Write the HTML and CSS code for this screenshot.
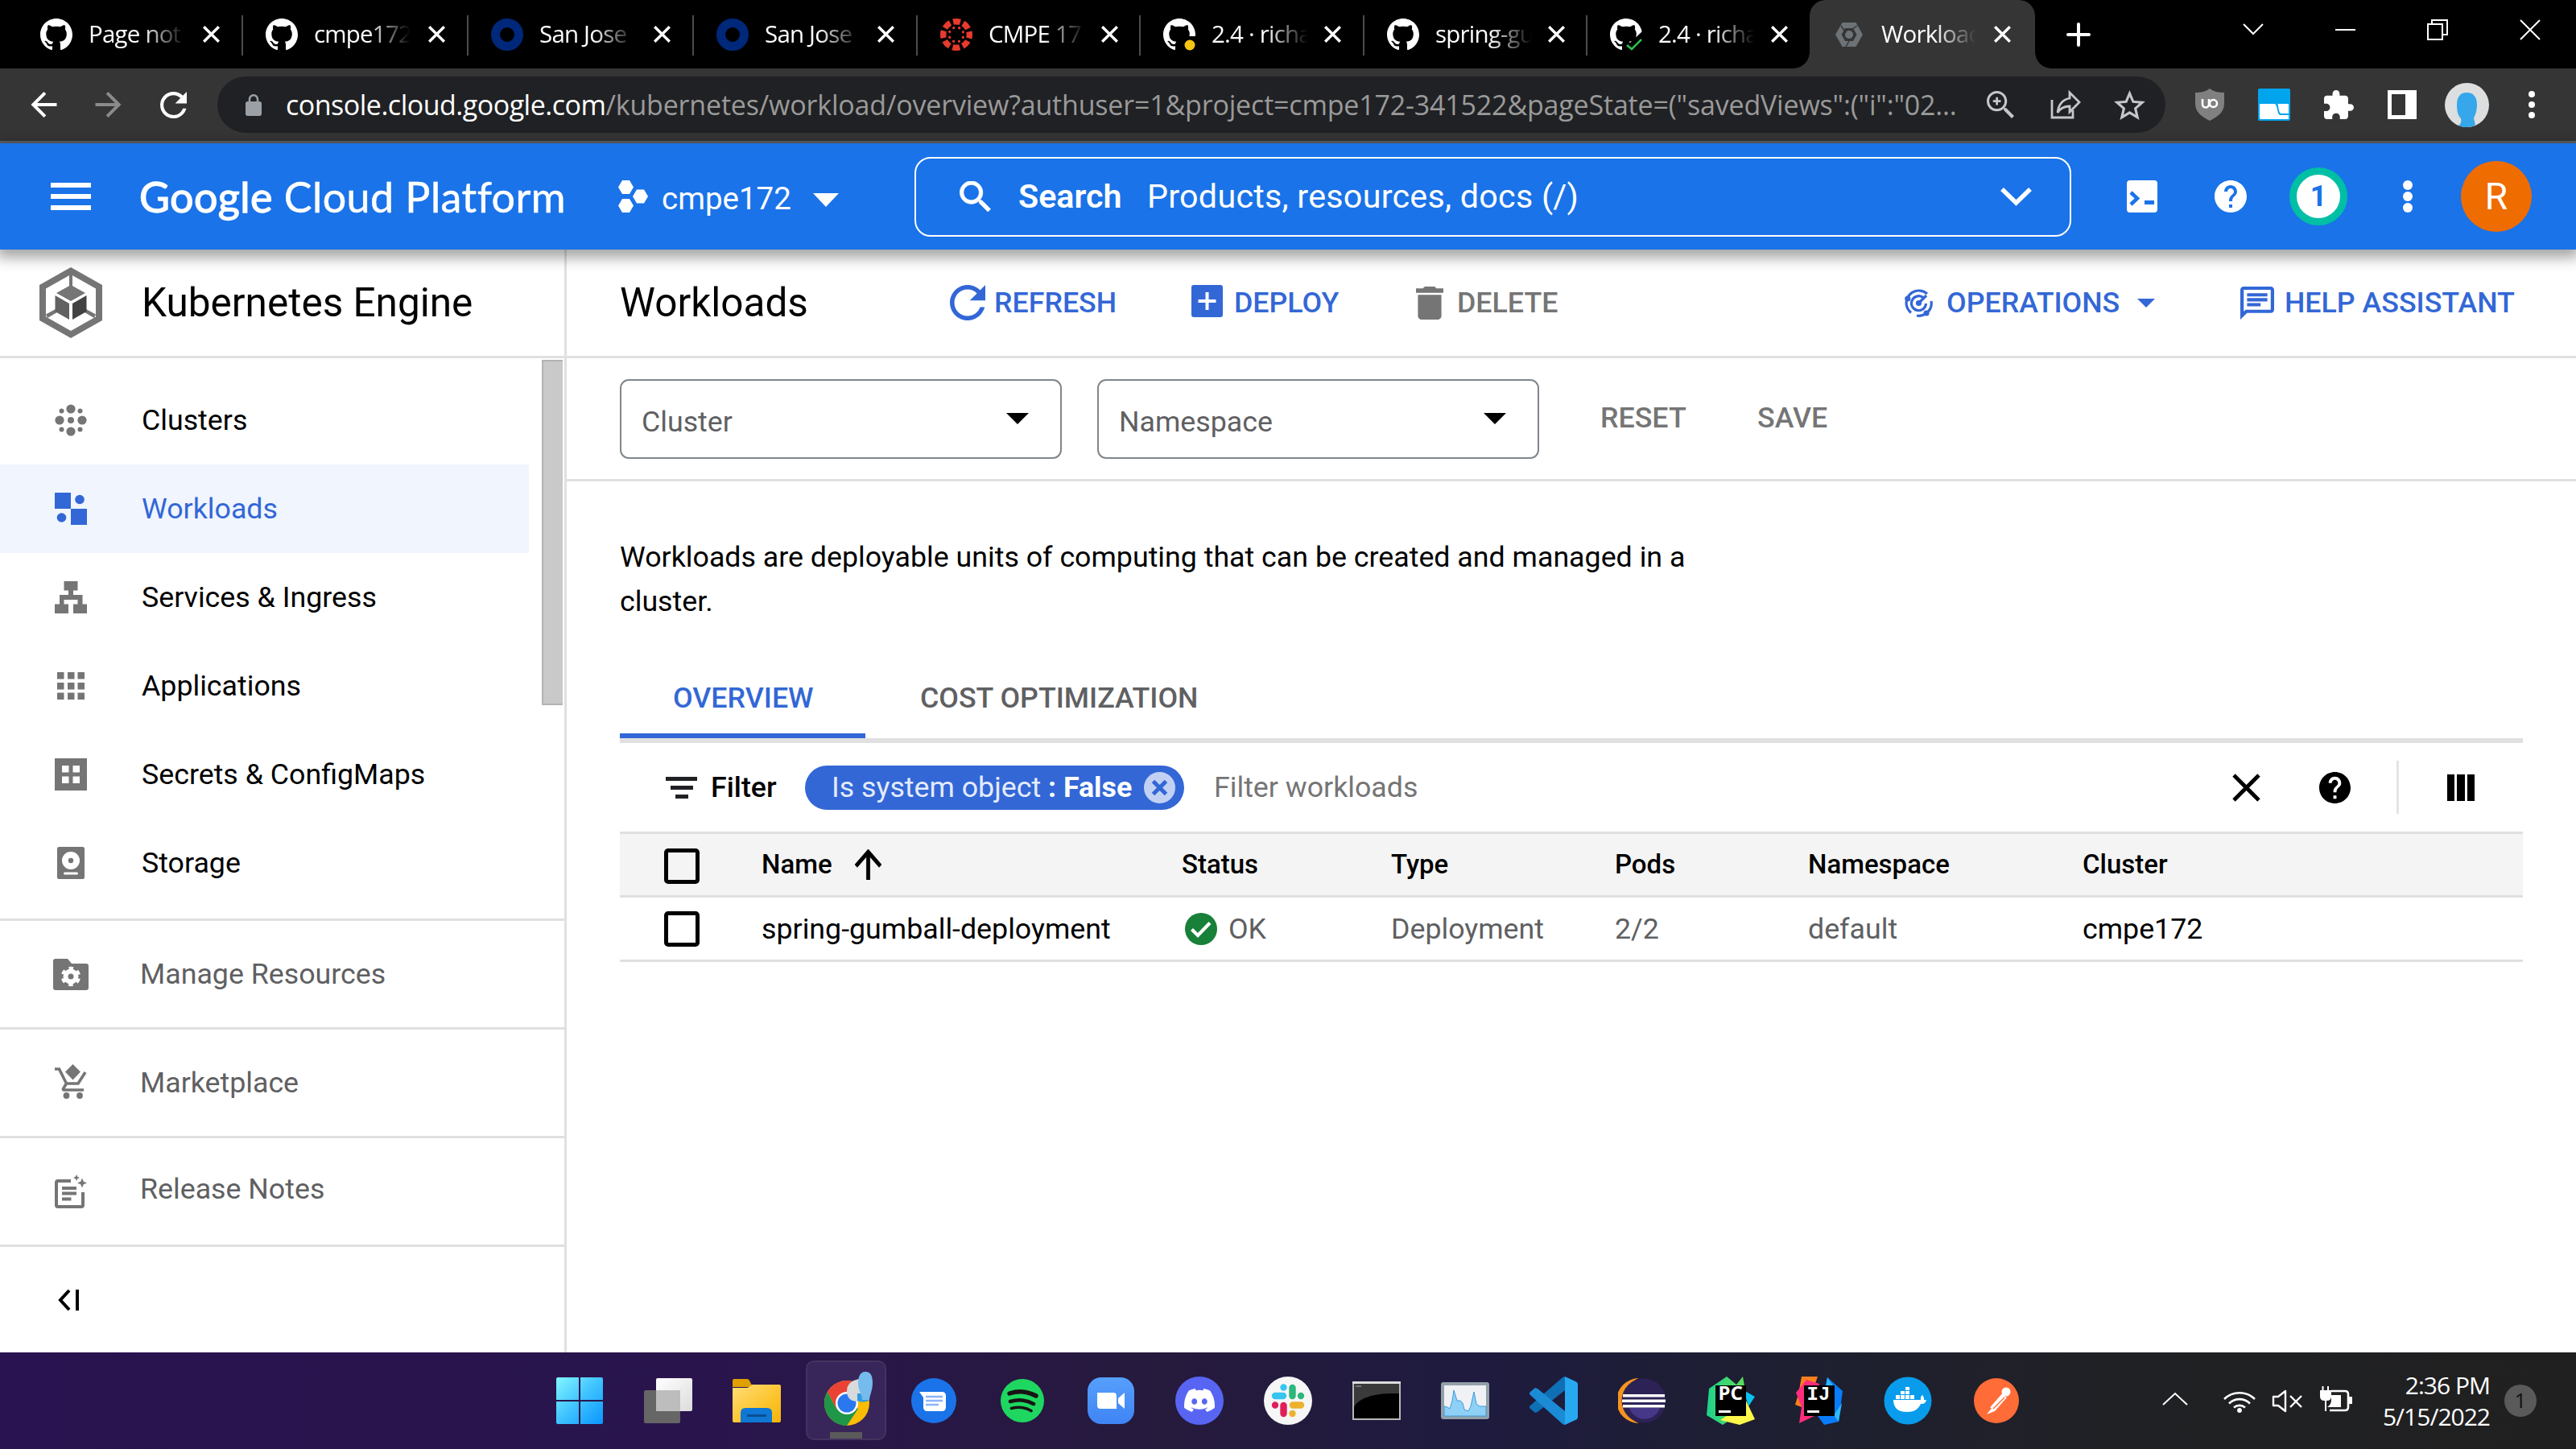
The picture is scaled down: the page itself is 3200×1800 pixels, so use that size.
FILE: index.html
```html
<!DOCTYPE html>
<html lang="en">
<head>
<meta charset="utf-8">
<title>Workloads – Kubernetes Engine</title>
<link rel="stylesheet" href="styles.css">
</head>
<body>
<svg class="defs" width="0" height="0" aria-hidden="true">
  <defs>
    <symbol id="github" viewBox="0 0 16 16"><path fill="#fff" d="M8 0C3.58 0 0 3.58 0 8c0 3.54 2.29 6.53 5.47 7.59.4.07.55-.17.55-.38 0-.19-.01-.82-.01-1.49-2.01.37-2.53-.49-2.69-.94-.09-.23-.48-.94-.82-1.13-.28-.15-.68-.52-.01-.53.63-.01 1.08.58 1.23.82.72 1.21 1.87.87 2.33.66.07-.52.28-.87.51-1.07-1.78-.2-3.64-.89-3.64-3.95 0-.87.31-1.59.82-2.15-.08-.2-.36-1.02.08-2.12 0 0 .67-.21 2.2.82.64-.18 1.32-.27 2-.27.68 0 1.36.09 2 .27 1.53-1.04 2.2-.82 2.2-.82.44 1.1.16 1.92.08 2.12.51.56.82 1.27.82 2.15 0 3.07-1.87 3.75-3.65 3.95.29.25.54.73.54 1.48 0 1.07-.01 1.93-.01 2.2 0 .21.15.46.55.38A8.013 8.013 0 0016 8c0-4.42-3.58-8-8-8z"/></symbol>
    <symbol id="close" viewBox="0 0 21 21"><path stroke="#fff" stroke-width="3.4" d="M1.2 1.2l18.6 18.6M19.8 1.2L1.2 19.8"/></symbol>
    <symbol id="ring" viewBox="0 0 40 40"><circle cx="20" cy="20" r="14.5" fill="none" stroke="#00287a" stroke-width="11"/></symbol>
    <symbol id="help" viewBox="2 2 20 20"><path d="M12 2C6.48 2 2 6.48 2 12s4.48 10 10 10 10-4.48 10-10S17.52 2 12 2zm1 17h-2v-2h2v2zm2.07-7.75l-.9.92C13.45 12.9 13 13.5 13 15h-2v-.5c0-1.1.45-2.1 1.17-2.83l1.24-1.26c.37-.36.59-.86.59-1.41 0-1.1-.9-2-2-2s-2 .9-2 2H8c0-2.21 1.79-4 4-4s4 1.79 4 4c0 .88-.36 1.68-.93 2.25z"/></symbol>
    <linearGradient id="winG" x1="0" y1="0" x2="1" y2="1"><stop offset="0" stop-color="#83f6ff"/><stop offset=".5" stop-color="#3fc3ff"/><stop offset="1" stop-color="#0a95ff"/></linearGradient>
    <linearGradient id="folG" x1="0" y1="0" x2="1" y2="1"><stop offset="0" stop-color="#ffdd7a"/><stop offset=".6" stop-color="#fcc42c"/><stop offset="1" stop-color="#f3b30c"/></linearGradient>
    <linearGradient id="zmG" x1="0" y1="0" x2="0" y2="1"><stop offset="0" stop-color="#569ffc"/><stop offset="1" stop-color="#3f84f4"/></linearGradient>
    <linearGradient id="pcG" x1="0" y1="0" x2="1" y2="0"><stop offset="0" stop-color="#1fd18b"/><stop offset="1" stop-color="#5ddf57"/></linearGradient>
    <linearGradient id="tvG" x1="0" y1="0" x2="1" y2="1"><stop offset="0" stop-color="#fff"/><stop offset="1" stop-color="#dcdcdc"/></linearGradient>
  </defs>
</svg>

<header class="tabstrip">
  <div class="tab"><svg class="fav"><use href="#github"/></svg><span class="tab-label">Page not</span><svg class="x"><use href="#close"/></svg></div>
  <div class="tab"><svg class="fav"><use href="#github"/></svg><span class="tab-label">cmpe172</span><svg class="x"><use href="#close"/></svg></div>
  <div class="tab"><svg class="fav"><use href="#ring"/></svg><span class="tab-label">San Jose</span><svg class="x"><use href="#close"/></svg></div>
  <div class="tab t278"><svg class="fav"><use href="#ring"/></svg><span class="tab-label">San Jose</span><svg class="x"><use href="#close"/></svg></div>
  <div class="tab t277"><svg class="fav" viewBox="0 0 40 40"><circle cx="20" cy="20" r="16.3" fill="none" stroke="#e63b2e" stroke-width="7.4" stroke-dasharray="9 3.8" stroke-dashoffset="4.5"/><circle cx="20" cy="20" r="9" fill="none" stroke="#e63b2e" stroke-width="3.2" stroke-linecap="round" stroke-dasharray=".1 6.97" stroke-dashoffset="-3.4"/></svg><span class="tab-label">CMPE 17</span><svg class="x"><use href="#close"/></svg></div>
  <div class="tab t278"><svg class="fav" viewBox="0 0 40 40"><use href="#github" width="40" height="40"/><path fill="#000" d="M18 40V30l6-8h16v18z"/><circle cx="33" cy="33" r="6.5" fill="#f9c513"/></svg><span class="tab-label">2.4 · rich<i>a</i></span><svg class="x"><use href="#close"/></svg></div>
  <div class="tab t277"><svg class="fav"><use href="#github"/></svg><span class="tab-label">spring-g<i>u</i></span><svg class="x"><use href="#close"/></svg></div>
  <div class="tab last"><svg class="fav" viewBox="0 0 40 40"><use href="#github" width="40" height="40"/><path fill="#000" d="M17 40V30l8 0 15-14v24z"/><path fill="none" stroke="#2cbe4e" stroke-width="2.6" d="M21 33l6 5 12-12"/></svg><span class="tab-label">2.4 · rich<i>a</i></span><svg class="x"><use href="#close"/></svg></div>
  <div class="tab active"><svg class="gcpfav" viewBox="0 0 34 30"><path fill="#6d7276" fill-rule="evenodd" d="M8.5 0h17L34 15l-8.500 15h-17L0 15zM12 7L7.500 15 12 23h10l4.500-8L22 7z"/><circle cx="17" cy="15" r="5" fill="#6d7276"/><path stroke="#353535" stroke-width="1.500" d="M7 4l6 9M27 4l-6 4M17 23l-4 7"/></svg><span class="tab-label">Workloa<i>c</i></span><svg class="x"><use href="#close"/></svg></div>
  <svg class="plus" viewBox="0 0 30 30"><path stroke="#fff" stroke-width="4" stroke-linecap="round" d="M15 2v26M2 15h26"/></svg>
  <div class="winctl">
    <svg width="26" height="15" viewBox="0 0 26 15"><path fill="none" stroke="#fff" stroke-width="2" d="M1 1l12 12L25 1"/></svg>
    <svg width="25" height="26" viewBox="0 0 25 26"><path fill="#fff" d="M0 12h25v2H0z"/></svg>
    <svg width="26" height="26" viewBox="0 0 26 26"><path fill="none" stroke="#fff" stroke-width="2" d="M1 6h18v19H1zM6 6V1h19v18h-6"/></svg>
    <svg width="26" height="26" viewBox="0 0 26 26"><path stroke="#fff" stroke-width="2" d="M1 1l24 24M25 1L1 25"/></svg>
  </div>
</header>

<div class="toolbar">
  <svg width="33" height="32" viewBox="4 4 16 16"><path fill="#fff" d="M20 11H7.830l5.590-5.590L12 4l-8 8 8 8 1.410-1.410L7.830 13H20v-2z"/></svg>
  <svg width="33" height="32" viewBox="4 4 16 16"><path fill="#8a8a8a" d="M12 4l-1.410 1.410L16.170 11H4v2h12.170l-5.580 5.590L12 20l8-8z"/></svg>
  <svg width="35" height="33" viewBox="4 4 16 16"><path fill="#fff" d="M17.650 6.350C16.200 4.900 14.210 4 12 4c-4.420 0-7.990 3.580-7.990 8s3.570 8 7.990 8c3.730 0 6.840-2.550 7.730-6h-2.080c-.82 2.330-3.040 4-5.650 4-3.310 0-6-2.690-6-6s2.690-6 6-6c1.660 0 3.140.69 4.220 1.780L13 11h7V4l-2.350 2.350z"/></svg>
  <div class="omnibox">
    <svg class="lock" viewBox="4 1 16 21" preserveAspectRatio="none"><path fill="#9aa0a6" d="M18 8h-1V6c0-2.760-2.240-5-5-5S7 3.240 7 6v2H6c-1.100 0-2 .9-2 2v10c0 1.100.9 2 2 2h12c1.100 0 2-.9 2-2V10c0-1.100-.9-2-2-2zM9 6c0-1.660 1.340-3 3-3s3 1.340 3 3v2H9V6z"/></svg>
    <span class="url"><b>console.cloud.google.com</b>/kubernetes/workload/overview?authuser=1&amp;project=cmpe172-341522&amp;pageState=("savedViews":("i":"02...</span>
    <svg width="34" height="34" viewBox="3 3 17.500 17.500"><path fill="#c4c7c9" d="M15.500 14h-.79l-.28-.27C15.410 12.590 16 11.110 16 9.500 16 5.910 13.090 3 9.500 3S3 5.910 3 9.500 5.910 16 9.500 16c1.610 0 3.090-.59 4.230-1.570l.27.28v.79l5 4.990L20.490 19l-4.990-5zm-6 .4C6.800 14.400 4.600 12.200 4.600 9.500S6.800 4.600 9.500 4.600s4.900 2.200 4.900 4.900-2.200 4.900-4.900 4.900zM12 10.200h-1.800V12H8.800v-1.800H7V8.800h1.800V7h1.400v1.800H12z"/></svg>
    <svg class="share" width="38" height="36" viewBox="0 0 38 36"><path fill="none" stroke="#c4c7c9" stroke-width="2.800" d="M2 12v22h26v-9M24 3l12 12-12 12v-7c-8 0-12 3-15 8 1-9 5-16 15-18z"/></svg>
    <svg width="39" height="37" viewBox="2 2 20 19"><path fill="#c4c7c9" d="M22 9.240l-7.190-.62L12 2 9.190 8.630 2 9.240l5.460 4.730L5.820 21 12 17.270 18.180 21l-1.630-7.030L22 9.240zM12 15.400l-3.760 2.270 1-4.280-3.320-2.880 4.380-.38L12 6.100l1.710 4.040 4.380.38-3.320 2.880 1 4.280L12 15.400z"/></svg>
  </div>
  <div class="exts">
    <svg width="36" height="40" viewBox="0 0 36 40"><path fill="#808080" d="M18 0c5 4 11 5 18 5v14c0 10-8 16-18 21C8 35 0 29 0 19V5c7 0 13-1 18-5z"/><path fill="none" stroke="#fff" stroke-width="2.600" d="M9 13v6.500a4 4 0 008 0V13"/><circle cx="22.500" cy="18.500" r="4.500" fill="none" stroke="#fff" stroke-width="2.600"/></svg>
    <svg width="40" height="40" viewBox="0 0 40 40"><rect width="40" height="40" rx="2" fill="#03a4ee"/><path fill="#fff" d="M2 19h18c5 0 3 14 8 14h10v5H3l-1-1zM24 19h14v12h-9c-4 0-3-10-5-12z"/></svg>
    <svg width="37" height="36" viewBox="2 1 21 21" preserveAspectRatio="none"><path fill="#fff" d="M20.500 11H19V7c0-1.100-.9-2-2-2h-4V3.500C13 2.120 11.880 1 10.500 1S8 2.120 8 3.500V5H4c-1.100 0-1.990.9-1.990 2v3.800H3.500c1.490 0 2.700 1.210 2.700 2.700s-1.210 2.700-2.700 2.700H2V20c0 1.100.9 2 2 2h3.800v-1.500c0-1.490 1.210-2.700 2.700-2.700 1.490 0 2.700 1.210 2.700 2.700V22H17c1.100 0 2-.9 2-2v-4h1.500c1.380 0 2.500-1.120 2.500-2.500S21.880 11 20.500 11z"/></svg>
    <svg width="36" height="36" viewBox="0 0 36 36"><path fill="#fff" fill-rule="evenodd" d="M0 0h36v36H0zM5 5v26h17V5z"/></svg>
    <svg width="55" height="55" viewBox="0 0 55 55"><circle cx="27.500" cy="27.500" r="27.500" fill="#dcdee0"/><path fill="#35a7ea" d="M27 12c9 0 13 6 13 15 0 8-2 12-4 17l2 8c-6 4-14 4-21 1 3-2 4-5 3-9-4-4-5-10-5-17 0-9 4-15 12-15z"/></svg>
    <svg width="8" height="34" viewBox="0 0 8 34"><g fill="#fff"><circle cx="4" cy="4" r="4"/><circle cx="4" cy="17" r="4"/><circle cx="4" cy="30" r="4"/></g></svg>
  </div>
</div>

<header class="gcp">
  <svg class="burger" viewBox="0 0 50 34"><path fill="#fff" d="M0 0h50v6H0zM0 14h50v6H0zM0 28h50v6H0z"/></svg>
  <span class="brand"><span class="goog">Google</span> Cloud Platform</span>
  <svg class="hexes" viewBox="0 0 37 40"><g fill="#fff"><path d="M5 0h9l5 8.500L14 17H5L0 8.500zM5 23h9l5 8.500L14 40H5L0 31.500zM23 11.500h9l5 8.500-5 8.500h-9L18 20z"/></g></svg>
  <span class="project">cmpe172</span>
  <svg class="pcaret" viewBox="0 0 32 17"><path fill="#fff" d="M0 0h32L16 17z"/></svg>
  <div class="search">
    <svg width="39" height="38" viewBox="3 3 17.500 17.500"><path fill="#fff" stroke="#fff" stroke-width=".4" d="M15.500 14h-.79l-.28-.27C15.410 12.590 16 11.110 16 9.500 16 5.910 13.090 3 9.500 3S3 5.910 3 9.500 5.910 16 9.500 16c1.610 0 3.090-.59 4.230-1.570l.27.28v.79l5 4.990L20.490 19l-4.990-5zm-6 0C7.010 14 5 11.990 5 9.500S7.010 5 9.500 5 14 7.010 14 9.500 11.990 14 9.500 14z"/></svg>
    <b>Search</b><span>Products, resources, docs (/)</span>
    <svg width="39" height="23" viewBox="0 0 39 23"><path fill="none" stroke="#fff" stroke-width="5.500" d="M2 2l17.500 17L37 2"/></svg>
  </div>
  <div class="gcp-right">
    <svg width="38" height="40" viewBox="0 0 38 40"><rect width="38" height="40" rx="4" fill="#fff"/><path fill="none" stroke="#1a73e8" stroke-width="4.500" d="M5 15l8 7.500L5 30"/><path fill="#1a73e8" d="M22 25h12v5H22z"/></svg>
    <svg width="40" height="40" fill="#fff"><use href="#help"/></svg>
    <span class="notif">1</span>
    <svg width="12" height="40" viewBox="0 0 12 40"><g fill="#fff"><circle cx="6" cy="6" r="6"/><circle cx="6" cy="20" r="6"/><circle cx="6" cy="34" r="6"/></g></svg>
    <span class="avatar">R</span>
  </div>
</header>

<div class="app">
  <aside class="side">
    <div class="side-head">
      <svg width="78" height="88" viewBox="0 0 78 88"><path fill="#757575" fill-rule="evenodd" d="M39 0l39 22v44L39 88 0 66V22zM39 9L8 26.500v35L39 79l31-17.500v-35z"/><path fill="#757575" d="M37 9h4v14h-4zM8 58.500L20 52l2 4-12 7zM70 58.500L58 52l-2 4 12 7z"/><path fill="#757575" d="M39 22l18 10-18 10-18-10z"/><path fill="#616161" d="M19.500 35L37 45v20L19.500 55z"/><path fill="#424242" d="M58.500 35L41 45v20l17.500-10z"/></svg>
      <span>Kubernetes Engine</span>
    </div>
    <div class="nav">
      <ul>
        <li><svg viewBox="0 0 40 40"><g fill="#757575"><circle cx="20" cy="6" r="5.600"/><circle cx="20" cy="34" r="5.600"/><circle cx="6" cy="20" r="5.600"/><circle cx="34" cy="20" r="5.600"/><circle cx="20" cy="20" r="4"/><circle cx="8.500" cy="8.500" r="3"/><circle cx="31.500" cy="8.500" r="3"/><circle cx="8.500" cy="31.500" r="3"/><circle cx="31.500" cy="31.500" r="3"/></g></svg><span>Clusters</span></li>
        <li class="on"><svg viewBox="0 0 40 40"><g fill="#3367d6"><path d="M0 0h20v20H0zM20 20h20v20H20z"/><circle cx="31" cy="8.500" r="5.800"/><circle cx="8.500" cy="31" r="5.800"/></g></svg><span>Workloads</span></li>
        <li><svg viewBox="0 0 40 40"><path fill="#757575" d="M11.500 0h17v11.500H23V17h11.500v11.500H40V40H23V28.500h5.500V23h-17v5.500H17V40H0V28.500h6V17h11v-5.500h-5.500z"/></svg><span>Services &amp; Ingress</span></li>
        <li><svg viewBox="0 0 40 40"><path fill="#757575" d="M3 3h8.500v8.500H3zM16 3h8.500v8.500H16zM28.500 3H37v8.500h-8.500zM3 16h8.500v8.500H3zM16 16h8.500v8.500H16zM28.500 16H37v8.500h-8.500zM3 28.500h8.500V37H3zM16 28.500h8.500V37H16zM28.500 28.500H37V37h-8.500z"/></svg><span>Applications</span></li>
        <li><svg viewBox="0 0 40 40"><path fill="#757575" fill-rule="evenodd" d="M0 0h40v40H0zM9 9v8.500h8.500V9zM22.500 9v8.500H31V9zM9 22.500V31h8.500v-8.500zM22.500 22.500V31H31v-8.500z"/></svg><span>Secrets &amp; ConfigMaps</span></li>
        <li><svg viewBox="0 0 40 40"><rect x="3" width="34" height="40" rx="2.500" fill="#757575"/><circle cx="20" cy="17" r="11" fill="#fff"/><circle cx="20" cy="17" r="3.200" fill="#757575"/><rect x="11" y="31.500" width="18" height="3" rx="1.500" fill="#fff"/></svg><span>Storage</span></li>
      </ul>
      <div class="thumb"></div>
    </div>
    <div class="foot"><svg width="44" height="39" viewBox="0 0 44 39"><path fill="#757575" d="M3 0h15l5 6h18c2 0 3 1 3 3v27c0 2-1 3-3 3H3c-2 0-3-1-3-3V3c0-2 1-3 3-3z"/><circle cx="22" cy="22" r="6.500" fill="none" stroke="#fff" stroke-width="6"/><circle cx="22" cy="22" r="10.500" fill="none" stroke="#fff" stroke-width="3.500" stroke-dasharray="5.500 5.500" stroke-dashoffset="-2.700"/></svg><span>Manage Resources</span></div>
    <div class="foot market"><svg width="40" height="43" viewBox="0 0 40 43"><path fill="#757575" d="M22.500 0l9.500 9.500-9.500 10L13 9.500z"/><path fill="none" stroke="#757575" stroke-width="3.600" d="M0 6h5.500l9 18H29l9-14M14.500 24l-4 6.500q-.5 1.500 1 1.500H36"/><circle cx="14.500" cy="39" r="3.900" fill="#757575"/><circle cx="31" cy="39" r="3.900" fill="#757575"/></svg><span>Marketplace</span></div>
    <div class="foot rel"><svg width="40" height="42" viewBox="0 0 40 42"><path fill="none" stroke="#757575" stroke-width="4" d="M20 8H4q-2 0-2 2v28q0 2 2 2h29q2 0 2-2V22"/><path fill="#757575" d="M9 15h18v4H9zM9 21.500h18v4H9zM9 28.500h11.500v4H9zM34 4.500l1.800 4.200L40 10.500l-4.200 1.800L34 16.500l-1.800-4.200-4.200-1.800 4.200-1.800zM27 0l1.200 2.800L31 4l-2.800 1.200L27 8l-1.200-2.800L23 4l2.800-1.200z"/></svg><span>Release Notes</span></div>
    <div class="collapse"><svg width="27" height="26" viewBox="0 0 27 26"><path fill="none" stroke="#000" stroke-width="4" d="M14 1L3 13l11 12M24 0v26"/></svg></div>
  </aside>

  <main>
    <div class="page-head">
      <h1>Workloads</h1>
      <a class="act refresh"><svg width="44" height="44" viewBox="4 4 16 16"><path d="M17.650 6.350C16.200 4.900 14.210 4 12 4c-4.420 0-7.990 3.580-7.990 8s3.570 8 7.990 8c3.730 0 6.840-2.550 7.730-6h-2.080c-.82 2.330-3.040 4-5.650 4-3.310 0-6-2.690-6-6s2.690-6 6-6c1.660 0 3.140.69 4.220 1.780L13 11h7V4l-2.350 2.350z"/></svg>REFRESH</a>
      <a class="act deploy"><svg width="39" height="40" viewBox="0 0 39 40"><path fill-rule="evenodd" d="M3 0h33q3 0 3 3v34q0 3-3 3H3q-3 0-3-3V3q0-3 3-3zM17.500 9v9H8.500v4h9v9h4v-9h9v-4h-9V9z"/></svg>DEPLOY</a>
      <a class="act delete"><svg width="34" height="41" viewBox="5 3 14 18" preserveAspectRatio="none"><path d="M6 19c0 1.100.9 2 2 2h8c1.100 0 2-.9 2-2V7.500H6V19zM19 4h-3.500l-1-1h-5l-1 1H5v2.400h14V4z"/></svg>DELETE</a>
      <a class="act ops"><svg width="35" height="35" viewBox="0 0 35 35"><g fill="none" stroke="#3367d6" stroke-width="3.200"><path d="M28 6A15.500 15.500 0 0 0 2.500 21A15.500 15.500 0 0 0 8 29.500M33 15A15.500 15.500 0 0 1 15 33M23.500 11A9 9 0 1 0 26.500 18"/><path d="M17.500 17.500L27 8"/></g><circle cx="17.500" cy="17.500" r="3.600"/><circle cx="3.800" cy="12" r="3.600"/><circle cx="27" cy="30" r="3.600"/></svg>OPERATIONS</a>
      <svg class="opcaret" viewBox="0 0 22 11"><path fill="#3367d6" d="M0 0h22L11 11z"/></svg>
      <a class="act assist"><svg width="42" height="41" viewBox="2 2 20 20" preserveAspectRatio="none"><path d="M20 2H4c-1.100 0-1.990.9-1.990 2L2 22l4-4h14c1.100 0 2-.9 2-2V4c0-1.100-.9-2-2-2zm0 14H5.170L4 17.170V4h16v12zM6 12h8v2H6zM6 9h12v2H6zM6 6h12v2H6z"/></svg>HELP ASSISTANT</a>
    </div>

    <div class="scope">
      <div class="select">Cluster<svg viewBox="0 0 28 14"><path d="M0 0h28L14 14z"/></svg></div>
      <div class="select">Namespace<svg viewBox="0 0 28 14"><path d="M0 0h28L14 14z"/></svg></div>
      <span class="btn reset">RESET</span><span class="btn">SAVE</span>
    </div>

    <section class="body">
      <p>Workloads are deployable units of computing that can be created and managed in a<br>cluster.</p>
      <nav class="tabs"><a class="sel">OVERVIEW</a><a>COST OPTIMIZATION</a></nav>
      <div class="filterbar">
        <svg class="ficon" viewBox="0 0 39 27"><path fill="#202124" d="M0 0h39v5H0zM6 11h28v5H6zM12 22h16v5H12z"/></svg>
        <span class="flabel">Filter</span>
        <div class="chip"><span>Is system object <b>: False</b></span><svg width="39" height="39" viewBox="0 0 39 39"><circle cx="19.500" cy="19.500" r="19.500" fill="#c2d1f3"/><path stroke="#3367d6" stroke-width="5" d="M11.500 11.500l16 16M27.500 11.500l-16 16"/></svg></div>
        <span class="ph">Filter workloads</span>
        <svg class="clear" viewBox="0 0 35 35"><path stroke="#000" stroke-width="4.800" d="M2 2l31 31M33 2L2 33"/></svg>
        <svg class="fhelp"><use href="#help"/></svg>
        <i class="vr"></i>
        <svg class="cols" viewBox="0 0 34 33"><path d="M0 0h9v33H0zM12 0h10v33H12zM25 0h9v33h-9z"/></svg>
      </div>
      <div class="row thead">
        <i class="box"></i><span class="name">Name<svg viewBox="4 4 16 16" preserveAspectRatio="none"><path stroke="#000" stroke-width=".35" d="M4 12l1.410 1.410L11 7.830V20h2V7.830l5.580 5.590L20 12l-8-8-8 8z"/></svg></span><span>Status</span><span>Type</span><span>Pods</span><span>Namespace</span><span>Cluster</span>
      </div>
      <div class="row">
        <i class="box"></i><span class="dark">spring-gumball-deployment</span><span class="ok"><svg viewBox="0 0 40 40"><circle cx="20" cy="20" r="20" fill="#188038"/><path fill="none" stroke="#fff" stroke-width="4.200" d="M8.500 20.500l7.500 7.500 15-15.500"/></svg>OK</span><span>Deployment</span><span>2/2</span><span>default</span><span class="dark">cmpe172</span>
      </div>
    </section>
  </main>
</div>

<footer class="taskbar">
  <div class="apps">
    <div><svg width="58" height="58" viewBox="0 0 58 58"><path fill="url(#winG)" d="M2 0h26v28H0V2q0-2 2-2zM30 0h26q2 0 2 2v26H30zM0 30h28v28H2q-2 0-2-2zM30 30h28v26q0 2-2 2H30z"/></svg></div>
    <div><svg width="60" height="56" viewBox="0 0 60 56"><rect y="15" width="45" height="41" rx="2" fill="#666"/><rect x="15" width="45" height="41" rx="2" fill="url(#tvG)"/><path fill="#bdbdbd" d="M15 15h30v26H15z"/></svg></div>
    <div><svg width="60" height="54" viewBox="0 0 60 54"><path fill="#dfa000" d="M2 0h16q2 0 3 2l4 8H0V2q0-2 2-2z"/><path fill="url(#folG)" d="M0 11h17q3 0 5-2l2-2h34q2 0 2 2v43q0 2-2 2H2q-2 0-2-2z"/><path fill="#0f78d4" d="M10 54V42q0-6 6-6h27q6 0 6 6v12z"/><path fill="#0a4f96" d="M18 44h24v3H18z"/></svg></div>
    <div class="current"><svg width="66" height="70" viewBox="0 0 66 70"><circle cx="33" cy="42" r="28" fill="#fbbc05"/><path fill="#ea4335" d="M8.800 28A28 28 0 0157.200 28H33L20 49z"/><path fill="#1f9648" d="M8.800 28A28 28 0 0033 70L47 49 33 42 20 49z"/><circle cx="33" cy="42" r="14" fill="#fff"/><circle cx="33" cy="42" r="11.500" fill="#2a78f0"/><path fill="#d8dadc" d="M48 12q-15 3-15 15t12 13h8V12z"/><path fill="#2f9be0" d="M46 30h14v9q-8 3-14 0z"/><path fill="#75bbec" d="M56 3c7 0 9 6 9 14 0 9-4 16-4 21h-9c0-7-5-12-5-20S49 3 56 3z"/></svg></div>
    <div><svg width="56" height="56" viewBox="0 0 56 56"><circle cx="28" cy="28" r="28" fill="#1a73e8"/><path fill="#fff" d="M10 17h28q5 0 5 5v14q0 5-5 5H20q-5 0-5-5V24z"/><path stroke="#8ab4f8" stroke-width="2.400" d="M18 23h21M18 28h21M18 33h16"/></svg></div>
    <div><svg width="54" height="54" viewBox="0 0 54 54"><circle cx="27" cy="27" r="27" fill="#1ed760"/><g fill="none" stroke="#191414" stroke-linecap="round"><path stroke-width="5.500" d="M11 18c11-3.500 23-2.500 33 3"/><path stroke-width="4.600" d="M12 28c10-3 20-2 29 3"/><path stroke-width="3.600" d="M13.500 36.500c8-2 17-1.500 24.500 3"/></g></svg></div>
    <div><svg width="58" height="58" viewBox="0 0 58 58"><rect width="58" height="58" rx="17" fill="url(#zmG)"/><path fill="#fff" d="M12 19h20q4 0 4 4v16H16q-4 0-4-4zM38 26l8-7v20l-8-7z"/></svg></div>
    <div><svg width="60" height="60" viewBox="0 0 60 60"><circle cx="30" cy="30" r="30" fill="#5865f2"/><svg x="11" y="15" width="38" height="29" viewBox="0 0 127.140 96.360"><path fill="#fff" d="M107.700,8.070A105.150,105.150,0,0,0,81.470,0a72.060,72.060,0,0,0-3.360,6.830A97.680,97.680,0,0,0,49,6.830,72.370,72.370,0,0,0,45.640,0,105.890,105.890,0,0,0,19.390,8.090C2.790,32.650-1.710,56.600.54,80.210h0A105.730,105.730,0,0,0,32.710,96.360,77.700,77.700,0,0,0,39.600,85.250a68.420,68.420,0,0,1-10.850-5.180c.91-.66,1.800-1.340,2.660-2a75.570,75.570,0,0,0,64.320,0c.87.71,1.760,1.390,2.660,2a68.680,68.680,0,0,1-10.870,5.190,77,77,0,0,0,6.890,11.100A105.250,105.250,0,0,0,126.600,80.220h0C129.240,52.840,122.090,29.110,107.700,8.070ZM42.450,65.690C36.180,65.690,31,60,31,53s5-12.740,11.430-12.740S54,46,53.890,53,48.840,65.690,42.450,65.690Zm42.240,0C78.410,65.690,73.250,60,73.250,53s5-12.740,11.440-12.740S96.230,46,96.120,53,91.080,65.690,84.690,65.690Z"/></svg></svg></div>
    <div><svg width="60" height="60" viewBox="0 0 60 60"><circle cx="30" cy="30" r="30" fill="#f6f6f6"/><g stroke-width="8.400" stroke-linecap="round"><path stroke="#36c5f0" d="M14 24h10M24.500 13.500v0"/><path stroke="#2eb67d" d="M35.500 14v10M46 24v0"/><path stroke="#ecb22e" d="M36 35.500h10M35.500 46v0"/><path stroke="#e01e5a" d="M24.500 36v10M14 35.500v0"/></g></svg></div>
    <div><svg width="60" height="48" viewBox="0 0 60 48"><path fill="#b8b8b8" d="M0 0h60v48H0z"/><path fill="#dcdcdc" d="M0 0h60v3H0z"/><path fill="#000" d="M2 3h56v43H2z"/><path fill="#3a3a3a" d="M2 3h56v12C28 14 8 20 2 32z"/><path stroke="#aaa" d="M4 6h7"/></svg></div>
    <div><svg width="60" height="46" viewBox="0 0 60 46"><rect width="60" height="46" rx="3" fill="#94a0a8"/><path fill="#eff1f4" d="M4 4h52v38H4z"/><path fill="#8fd0f7" stroke="#3b9ddb" d="M4 30l4 1 3 2 3-10 2-13 4 13h4l3 3 2 8 5 2 3-6 4-18 3 15 4 3h8v12H4z"/></svg></div>
    <div><svg width="60" height="60" viewBox="0 0 60 60"><path fill="#0f6fb4" d="M44 0v17L10 44l-3 1-6-5q-2-2 0-4L40 2q2-2 4-2z"/><path fill="#1b8bd6" d="M44 60V43L10 15l-3-1-6 5q-2 2 0 4l39 35q2 2 4 2z"/><path fill="#29a8f2" d="M44 0l13 6q3 1 3 4v40q0 3-3 4l-13 6z"/></svg></div>
    <div><svg width="60" height="56" viewBox="0 0 60 56"><path fill="#f7941e" d="M26 0A28 28 0 0026 56 30 30 0 0126 0z"/><circle cx="32" cy="28" r="27.500" fill="#2c2255"/><path fill="#473788" d="M14 37h38a20 20 0 01-38 0z"/><path fill="#fff" d="M6 20h52v3.500H6zM5 26.500h54v3.500H5zM6 33h52v3.500H6z"/></svg></div>
    <div><svg width="60" height="60" viewBox="0 0 60 60"><path fill="url(#pcG)" d="M3 15L25 0l12 10 8-10 3 18-10 30-18 12L0 48z"/><path fill="#07c3f2" d="M46 17l14 8-8 12z"/><path fill="#fcf84a" d="M48 28l12 25-19 7-24-6 14-9z"/><path fill="#000" d="M11 11h38v38H11z"/><path fill="#fff" d="M15 42h15v3H15z"/><text x="14.500" y="29" class="jb">PC</text></svg></div>
    <div><svg width="60" height="60" viewBox="0 0 60 60"><path fill="#fc801d" d="M8 0h20L14 40 0 35l4-13z"/><path fill="#fe2d7c" d="M14 4l16 5-6 40L5 58l3-20-7-18z"/><path fill="#087cfa" d="M40 1l19 17-5 38-18 4-8-11z"/><path fill="#2fb8ff" d="M40 1l8 12-10 6zM48 48l10-15-4 23z"/><path fill="#000" d="M11 11h38v38H11z"/><path fill="#fff" d="M15 42h15v3H15z"/><text x="14.500" y="29" class="jb mono">IJ</text></svg></div>
    <div><svg width="60" height="60" viewBox="0 0 60 60"><circle cx="30" cy="30" r="29.500" fill="#099cec"/><path fill="#fff" d="M10 29h36c0-3 0-5 2-6 2 2 2 4 2 6h3c-1 4-3 5-7 5-3 7-9 10-17 10-12 0-17-6-17-15zM15 23h5v5h-5zM21 23h5v5h-5zM27 23h5v5h-5zM33 23h5v5h-5zM21 18h5v4h-5zM27 18h5v4h-5zM27 13h5v4h-5z"/></svg></div>
    <div><svg width="56" height="56" viewBox="0 0 56 56"><circle cx="28" cy="28" r="28" fill="#ff6c37"/><circle cx="40" cy="17" r="5.500" fill="#fff"/><path fill="#fff" d="M36 21l5 3-15 17-10 4 7-9z"/><path fill="none" stroke="#fff" stroke-width="2.500" d="M36 20L22 36l4 3"/><path stroke="#ff6c37" stroke-width="1.500" d="M38 24L24 38"/></svg></div>
  </div>
  <div class="tray">
    <svg class="up" viewBox="0 0 32 17"><path fill="none" stroke="#fff" stroke-width="2" d="M1 16L16 2l15 14"/></svg>
    <svg class="wifi" viewBox="0 0 40 29"><g fill="none" stroke="#fff" stroke-width="2.600"><path d="M1 12a27 27 0 0138 0M7 17.500a18.500 18.500 0 0126 0M13 22.500a10.500 10.500 0 0114 0"/></g><circle cx="20" cy="26" r="2.900" fill="#fff"/></svg>
    <svg class="spk" viewBox="0 0 38 29"><path fill="none" stroke="#fff" stroke-width="2.400" stroke-linejoin="round" d="M2 9h6l9-7v25l-9-7H2zM23 8l14 14M37 8L23 22"/></svg>
    <svg class="bat" viewBox="0 0 40 32"><path fill="none" stroke="#fff" stroke-width="2.600" d="M14 6h17q4 0 4 4v16q0 4-4 4H12"/><path fill="#fff" d="M36 13h4v9h-4zM14 11h12v15H9q5-3 5-9zM0 5h14v8q0 5-6 5V31H6V18q-6 0-6-5zM2.500 0h2v5h-2zM9 0h2v5H9z"/></svg>
    <div class="clock"><span>2:36 PM</span><span>5/15/2022</span></div>
    <span class="count">1</span>
  </div>
</footer>
</body>
</html>
```

FILE: styles.css
```css
* { box-sizing: border-box; }
body { margin: 0; width: 3200px; height: 1800px; overflow: hidden; background: #fff; color: #000; font-family: Roboto, "Liberation Sans", sans-serif; font-size: 35.75px; white-space: nowrap; display: flex; flex-direction: column; }
svg { flex: none; display: block; }
.defs { position: absolute; }
ul, h1, p { margin: 0; padding: 0; list-style: none; font-weight: 400; }

/* browser tabs */
.tabstrip { flex: none; height: 85px; background: #000; padding-left: 22px; display: flex; align-items: center; color: #fff; font: 29.5px "Open Sans", "Noto Sans", sans-serif; }
.tab { flex: none; width: 280px; height: 85px; padding-left: 28px; display: flex; align-items: center; background: linear-gradient(#4c4c4c, #4c4c4c) right 19px / 2px 50px no-repeat; }
.tab svg { overflow: visible; }
.t278 { width: 278px; }
.t277 { width: 277px; }
.last { width: 276px; background: none; }
.fav { width: 40px; height: 40px; }
.tab-label { width: 122px; margin: -2px 0 0 20px; letter-spacing: -.8px; mask-image: linear-gradient(90deg, #000 55%, transparent 98%); }
.tab-label i { font-style: normal; letter-spacing: -5px; }
.x { width: 21px; height: 21px; margin-left: 20px; }
.t278 .x, .t277 .x, .last .x { margin-left: 18px; }
.active { position: relative; width: 280px; padding-left: 32px; background: #353535; border-radius: 20px 20px 0 0; }
.active::before, .active::after { content: ""; position: absolute; bottom: 0; width: 20px; height: 20px; }
.active::before { left: -20px; background: radial-gradient(circle at 0 0, transparent 19.5px, #353535 20px); }
.active::after { right: -20px; background: radial-gradient(circle at 100% 0, transparent 19.5px, #353535 20px); }
.gcpfav { width: 34px; height: 30px; }
.active .tab-label { margin-left: 23px; width: 120px; }
.plus { width: 30px; height: 30px; margin-left: 39px; }
.winctl { margin: -12px 44px 0 auto; display: flex; align-items: center; gap: 89px; }

/* address bar */
.toolbar { flex: none; height: 93px; padding-left: 38px; background: #353535; border-bottom: 3px solid #5f6061; display: flex; align-items: center; gap: 47px; }
.omnibox { width: 2420px; height: 70px; margin-left: -10px; padding-left: 35px; border-radius: 35px; background: #202124; display: flex; align-items: center; }
.lock { width: 20px; height: 27px; }
.url { width: 2113px; margin-left: 30px; color: #9a9a9a; font: 34px "Open Sans", "Noto Sans", sans-serif; letter-spacing: -.18px; }
.url b { font-weight: 400; color: #fff; letter-spacing: -.5px; }
.share { margin: 0 41px 0 45px; }
.exts { margin-left: -10px; display: flex; align-items: center; gap: 42px; }
.exts svg:nth-child(5) { margin-left: -7px; }
.exts svg:nth-child(6) { margin-left: 7px; }

/* cloud console bar */
.gcp { position: relative; z-index: 1; flex: none; height: 132px; background: #1a73e8; color: #fff; box-shadow: 0 6px 16px 4px rgba(0,0,0,.36); display: flex; align-items: center; font-size: 41.25px; }
.burger { width: 50px; height: 34px; margin-left: 63px; }
.brand { width: 595px; margin: 0 0 0 60px; font-family: Lato, sans-serif; font-size: 52px; letter-spacing: .45px; -webkit-text-stroke: .5px #fff; }
.goog { -webkit-text-stroke: 1.3px #fff; }
.hexes { width: 37px; height: 40px; }
.project { width: 188px; margin: 4px 0 0 17px; font-size: 38.5px; }
.pcaret { width: 32px; height: 17px; margin-top: 8px; }
.search { width: 1437px; height: 99px; margin-left: 94px; border: 2px solid #fff; border-radius: 20px; padding: 0 47px 0 54px; display: flex; align-items: center; letter-spacing: .25px; }
.search b { width: 160px; margin-left: 34px; font-weight: 600; letter-spacing: 0; }
.search svg:last-child { margin-left: auto; }
.gcp-right { margin: 0 55px 0 auto; display: flex; align-items: center; }
.gcp-right svg:nth-child(2) { margin-left: 71px; }
.notif { width: 72px; height: 72px; margin-left: 53px; border: 9px solid #00bfa5; border-radius: 50%; background: #fff; color: #1a73e8; font-size: 36px; font-weight: 700; line-height: 54px; text-align: center; }
.gcp-right svg:nth-child(4) { margin-left: 69px; }
.avatar { width: 88px; height: 88px; margin-left: 60px; border-radius: 50%; background: #ef6c00; font-size: 46px; line-height: 89px; text-align: center; }

/* frame */
.app { flex: none; height: 1370px; display: flex; }
.side { width: 704px; border-right: 3px solid #e0e0e0; display: flex; flex-direction: column; }
.side-head { flex: none; height: 135px; padding-left: 49px; border-bottom: 3px solid #e0e0e0; display: flex; align-items: center; gap: 49px; font-size: 49.5px; }
.nav { flex: none; height: 699px; padding-top: 22px; border-bottom: 3px solid #e0e0e0; display: flex; justify-content: space-between; }
.nav ul { width: 657px; }
.nav li { height: 110px; padding-left: 68px; display: flex; align-items: center; gap: 68px; }
.nav li svg { width: 40px; height: 40px; }
.nav .on { background: #f0f5fe; color: #3367d6; }
.thumb { width: 26px; height: 429px; margin: -20px 2px 0 0; background: #c9c9c9; border: 2px solid #b3b3b3; border-right: 0; }
.foot { flex: none; height: 135px; border-bottom: 3px solid #e0e0e0; display: flex; align-items: center; color: #5f6062; }
.foot svg { margin-left: 68px; margin-right: 66px; }
.foot svg[width="44"] { margin: 0 64px 0 66px; }
.market svg { margin-top: -3px; }
.rel span { margin-top: -7px; }
.collapse { flex: 1; padding-left: 72px; display: flex; align-items: center; }

main { flex: 1; }
.page-head { height: 135px; padding-left: 66px; border-bottom: 3px solid #e0e0e0; display: flex; align-items: center; }
h1 { width: 410px; font-size: 49.5px; }
.act { display: flex; align-items: center; font-weight: 500; color: #3367d6; fill: #3367d6; }
.refresh { width: 300px; gap: 11px; }
.deploy { width: 279px; gap: 14px; }
.deploy svg { margin-top: -4px; }
.delete { width: 607px; gap: 17px; color: #757575; fill: #757575; }
.ops { width: 289px; gap: 17px; }
.opcaret { width: 22px; height: 11px; margin-right: 106px; }
.assist { gap: 13px; }

.scope { height: 153px; padding: 0 0 0 66px; border-bottom: 3px solid #e0e0e0; display: flex; align-items: center; color: #5f6062; }
.select { width: 549px; height: 99px; margin: 1px 44px 0 0; padding: 7px 39px 0 25px; border: 2.5px solid #80868b; border-radius: 11px; display: flex; align-items: center; justify-content: space-between; }
.select svg { width: 28px; height: 14px; margin-top: -8px; }
.btn { margin-top: -2px; font-weight: 500; color: #757575; }
.reset { width: 195px; margin-left: 32px; }

.body { padding: 67px 66px 0; }
p { line-height: 55px; }
.tabs { height: 148px; border-bottom: 6px solid #e0e0e0; display: flex; align-items: flex-end; font-weight: 500; color: #5f6062; }
.tabs a { height: 99px; padding: 0 66px; line-height: 99px; }
.tabs .sel { width: 307px; background: linear-gradient(#3367d6, #3367d6) 0 100% / 305px 6px no-repeat; color: #3367d6; }
.filterbar { height: 110px; padding-left: 57px; display: flex; align-items: center; }
.ficon { width: 39px; height: 27px; }
.flabel { width: 117px; margin-left: 17px; font-weight: 500; }
.chip { width: 471px; height: 55px; padding: 0 11px 0 33px; border-radius: 28px; background: #3367d6; color: #e3ebfb; display: flex; align-items: center; justify-content: space-between; }
.chip b { color: #fff; font-weight: 700; }
.ph { width: 1265px; margin-left: 37px; color: #757575; }
.clear { width: 35px; height: 35px; }
.fhelp { width: 39px; height: 39px; margin-left: 73px; }
.vr { width: 3px; height: 66px; margin: 0 60px 0 57px; background: #e4e4e4; }
.cols { width: 34px; height: 33px; }
.row { height: 80px; padding-left: 55px; border-bottom: 3px solid #e0e0e0; display: grid; grid-template-columns: 121px 522px 260px 278px 240px 341px 1fr; align-items: center; color: #5f6062; }
.thead { height: 82px; border-top: 3px solid #e0e0e0; background: #f4f4f4; color: #000; font-size: 33px; font-weight: 500; }
.thead span { margin-top: -1px; }
.box { width: 44px; height: 44px; border: 5px solid #000; border-radius: 5px; }
.thead .box { margin-top: 4px; }
.name { display: flex; align-items: center; gap: 28px; }
.name svg { width: 33px; height: 38px; }
.dark { color: #000; }
.ok { display: flex; align-items: center; gap: 14px; padding-left: 4px; }
.ok svg { width: 40px; height: 40px; }

/* taskbar */
.taskbar { flex: none; height: 120px; padding-left: 665px; background: linear-gradient(90deg, #291350 0, #29154c 900px, #261a3d 1450px, #1e1b3f 1820px, #1e1f30 2250px, #202124 2650px, #202020 3200px); display: flex; align-items: center; color: #fff; font: 30px "Open Sans", "Noto Sans", sans-serif; }
.apps { display: flex; }
.apps div { width: 110px; height: 120px; display: flex; align-items: center; justify-content: center; }
.apps .current { width: 100px; height: 99px; margin: 10px 4px 10px 6px; border: 2px solid #44325f; border-radius: 10px; background: linear-gradient(#5a5a5a, #5a5a5a) 50% 87px / 40px 8px no-repeat, #38255a; align-items: flex-start; padding: 9px 0 0 2px; }
.jb { font: 700 24px "Noto Sans", sans-serif; fill: #fff; }
.mono { font-family: "Liberation Mono", monospace; }
.tray { display: flex; align-items: center; margin-left: 151px; }
.up { width: 32px; height: 17px; margin-top: -5px; }
.wifi { width: 40px; height: 29px; margin-left: 44px; }
.spk { width: 38px; height: 29px; margin-left: 20px; }
.bat { width: 40px; height: 32px; margin: -5px 0 0 22px; }
.clock { width: 171px; display: flex; flex-direction: column; align-items: flex-end; line-height: 39px; letter-spacing: -1px; }
.count { width: 40px; height: 40px; margin-left: 18px; border-radius: 50%; background: #5a5a5a; color: #111; font-size: 26px; line-height: 39px; text-align: center; }
```
